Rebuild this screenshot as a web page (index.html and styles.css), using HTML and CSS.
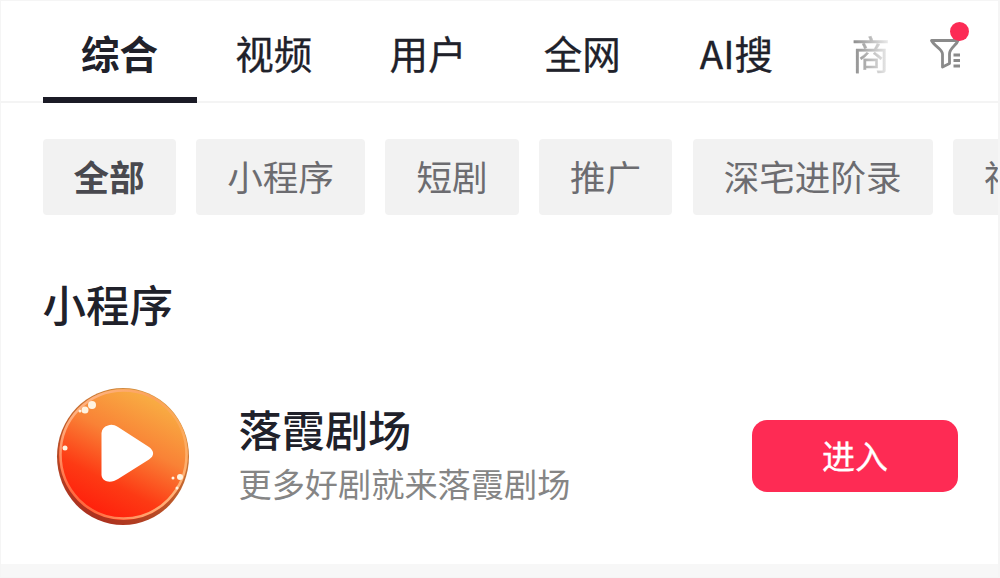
FILE: index.html
```
<!DOCTYPE html>
<html lang="zh-CN">
<head>
    <meta charset="UTF-8">
    <meta name="viewport" content="width=device-width, initial-scale=1.0">
    <title>搜索 - 落霞剧场</title>
    <link rel="stylesheet" href="styles.css">
</head>
<body>
    <div class="page">
        <header class="topbar">
            <nav class="tabs">
                <a class="tab active">综合</a>
                <a class="tab">视频</a>
                <a class="tab">用户</a>
                <a class="tab">全网</a>
                <a class="tab">AI搜</a>
                <a class="tab tab-cut">商</a>
            </nav>
            <button class="filter" aria-label="筛选">
                <svg width="34" height="34" viewBox="0 0 34 34" fill="none" stroke="#8a8a8a" stroke-width="2.8" stroke-linejoin="round">
                    <path d="M2.500 3.500H29C27.500 8.500 20.500 11 20.500 17V26.500L13.500 30V17C13.500 12 5.500 9.500 2.500 3.500Z"/>
                    <path d="M24.500 18h6.500M24.500 23.500h6.500M24.500 29h6.500"/>
                </svg>
                <span class="dot"></span>
            </button>
        </header>

        <div class="chips">
            <span class="chip selected">全部</span>
            <span class="chip">小程序</span>
            <span class="chip">短剧</span>
            <span class="chip">推广</span>
            <span class="chip">深宅进阶录</span>
            <span class="chip">神</span>
        </div>

        <section class="result">
            <h2>小程序</h2>
            <div class="app">
                <svg class="app-icon" width="154" height="154" viewBox="0 0 154 154">
                    <defs>
                        <linearGradient id="face" x1="0.3" y1="0.95" x2="0.75" y2="0.05">
                            <stop offset="0" stop-color="#ff200c"/>
                            <stop offset="0.25" stop-color="#fd3a14"/>
                            <stop offset="0.6" stop-color="#f98236"/>
                            <stop offset="1" stop-color="#f8b044"/>
                        </linearGradient>
                        <linearGradient id="rim" x1="0.2" y1="1" x2="0.8" y2="0">
                            <stop offset="0" stop-color="#a8281c"/>
                            <stop offset="0.5" stop-color="#c0602c"/>
                            <stop offset="1" stop-color="#d89a48"/>
                        </linearGradient>
                        <linearGradient id="shine" x1="0" y1="0" x2="1" y2="1">
                            <stop offset="0" stop-color="#ffc8a0"/>
                            <stop offset="0.4" stop-color="#ff9a68" stop-opacity="0.6"/>
                            <stop offset="0.6" stop-color="#ffb070" stop-opacity="0.5"/>
                            <stop offset="1" stop-color="#ffd098"/>
                        </linearGradient>
                    </defs>
                    <ellipse cx="80" cy="78.500" rx="66" ry="68.500" fill="url(#rim)"/>
                    <ellipse cx="80.500" cy="76.500" rx="64.500" ry="65.500" fill="url(#face)"/>
                    <ellipse cx="80.500" cy="76.500" rx="63" ry="64" fill="none" stroke="url(#shine)" stroke-width="2.500"/>
                    <path d="M65 47.500C68 46 71 46.500 75 49L106 69C111.500 73 111.500 78 106 81.500L75 101C69 105 59.500 105 58.500 97V55C59 51 61 48.500 65 47.500Z" fill="#fff"/>
                    <g fill="#fff3e0">
                        <circle cx="49" cy="27" r="4"/>
                        <circle cx="42" cy="32" r="3.500"/>
                        <circle cx="37" cy="33" r="1.500"/>
                        <circle cx="22" cy="70" r="2.500"/>
                        <circle cx="137" cy="99" r="3"/>
                        <circle cx="130" cy="100" r="1.500"/>
                        <circle cx="134" cy="110" r="1.500"/>
                    </g>
                </svg>
                <div class="app-info">
                    <div class="app-name">落霞剧场</div>
                    <div class="app-desc">更多好剧就来落霞剧场</div>
                </div>
                <button class="enter">进入</button>
            </div>
        </section>
        <div class="divider"></div>
    </div>
</body>
</html>
```

FILE: styles.css
```
* {
    box-sizing: border-box;
}

body {
    margin: 0;
    background: #fff;
    font-family: "Noto Sans CJK SC", sans-serif;
    color: #20212a;
}

button {
    border: none;
    padding: 0;
    font-family: inherit;
}

.page {
    display: flex;
    flex-direction: column;
    width: 1000px;
    height: 578px;
    overflow: hidden;
    border: 1px solid #f5f5f5;
    border-right-width: 2px;
}

/* Onglets */
.topbar {
    display: flex;
    flex-shrink: 0;
    height: 102px;
    padding-left: 41.5px;
    box-shadow: inset 0 -2px #f4f4f4;
}

.tabs {
    display: flex;
    width: 848px;
    overflow: hidden;
}

.tab {
    flex: 0 0 154.2px;
    height: 102px;
    padding-top: 22px;
    font-size: 38.5px;
    line-height: 58px;
    text-align: center;
    -webkit-text-stroke: 0.3px;
}

.tab.active {
    font-weight: bold;
    border-bottom: 6px solid #1b1b26;
    -webkit-text-stroke: 0;
}

.tab-cut {
    padding-left: 38px;
    text-align: left;
    color: transparent;
    background: linear-gradient(to right, #888 38px, #ececec 76px);
    background-clip: text;
    -webkit-background-clip: text;
}

.filter {
    position: relative;
    align-self: flex-start;
    width: 34px;
    height: 34px;
    margin: 36px 0 0 38px;
    background: none;
}

.filter svg {
    display: block;
}

.dot {
    position: absolute;
    top: -15px;
    right: -6px;
    width: 19px;
    height: 19px;
    border-radius: 50%;
    background: #fc2b55;
}

/* Filtres */
.chips {
    display: flex;
    flex-shrink: 0;
    gap: 20.5px;
    padding: 36px 0 0 41.5px;
    overflow: hidden;
}

.chip {
    flex-shrink: 0;
    height: 76px;
    padding: 0 31px;
    border-radius: 4px;
    background: #f2f2f2;
    color: #6c6c70;
    font-size: 35.6px;
    line-height: 74px;
}

.chip.selected {
    color: #49494f;
    font-weight: bold;
}

/* Mini-programme */
.result {
    flex: 1;
    padding: 57px 40px 0 41.5px;
}

h2 {
    margin: 0;
    font-size: 43.5px;
    font-weight: 500;
    line-height: 64px;
}

.app {
    display: flex;
    align-items: center;
    margin-top: 42px;
}

.app-icon {
    flex-shrink: 0;
}

.app-info {
    flex: 1;
    margin: -2px 0 0 42px;
}

.app-name {
    font-size: 43.2px;
    font-weight: 500;
    line-height: 58px;
}

.app-desc {
    color: #858585;
    font-size: 33.2px;
    line-height: 52px;
}

.enter {
    width: 206px;
    height: 72px;
    margin-top: 1px;
    border-radius: 15px;
    background: #fe2b54;
    color: #fff;
    font-size: 33px;
    line-height: 70px;
    padding-bottom: 2px;
    -webkit-text-stroke: 0.3px;
}

.divider {
    flex-shrink: 0;
    height: 13px;
    background: #f7f7f7;
}
```
